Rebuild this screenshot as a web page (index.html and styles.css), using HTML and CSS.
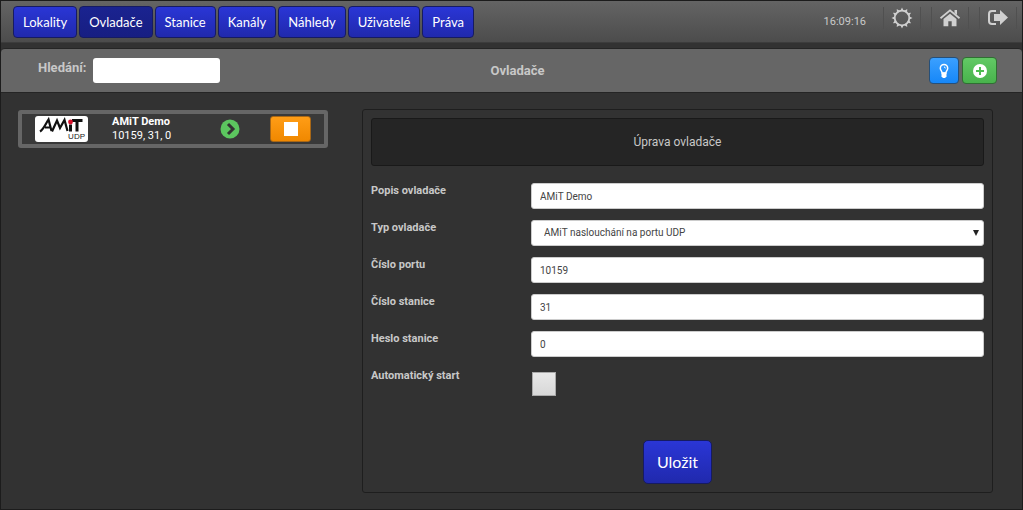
FILE: index.html
```html
<!DOCTYPE html>
<html lang="cs">
<head>
<meta charset="utf-8">
<title>Ovladače</title>
<link rel="stylesheet" href="styles.css">
</head>
<body>
<div class="app">
  <header class="topbar">
    <nav class="nav">
      <button class="nav-btn" type="button">Lokality</button>
      <button class="nav-btn active" type="button">Ovladače</button>
      <button class="nav-btn" type="button">Stanice</button>
      <button class="nav-btn" type="button">Kanály</button>
      <button class="nav-btn" type="button">Náhledy</button>
      <button class="nav-btn" type="button">Uživatelé</button>
      <button class="nav-btn" type="button">Práva</button>
    </nav>
    <time class="clock">16:09:16</time>
    <div class="tools">
      <a class="tool" href="#" aria-label="Nastavení"><svg width="22" height="22" viewBox="0 0 22 22"><circle cx="11" cy="11" r="7.3" fill="none" stroke="#d0d0d0" stroke-width="1.8"/><path d="M11 .5l1.500 3h-3zM11 21.500l1.500-3h-3zM.5 11l3 1.500v-3zM21.500 11l-3 1.500v-3z" fill="#d0d0d0"/><path d="M11 .5l1.500 3h-3zM11 21.500l1.500-3h-3zM.5 11l3 1.500v-3zM21.500 11l-3 1.500v-3z" fill="#d0d0d0" transform="rotate(30 11 11)"/><path d="M11 .5l1.500 3h-3zM11 21.500l1.500-3h-3zM.5 11l3 1.500v-3zM21.500 11l-3 1.500v-3z" fill="#d0d0d0" transform="rotate(60 11 11)"/></svg></a>
      <a class="tool" href="#" aria-label="Domů"><svg width="22" height="20" viewBox="0 0 22 20"><path d="M11 5.800 17.500 11v7.200h-4.800v-5H9.300v5H4.500V11z" fill="#d0d0d0"/><path d="M1.500 10.300 11 2.400l9.500 7.900" fill="none" stroke="#d0d0d0" stroke-width="1.800"/><path d="M15.500 2h2.500v5l-2.500-2z" fill="#d0d0d0"/></svg></a>
      <a class="tool" href="#" aria-label="Odhlásit"><svg width="22" height="20" viewBox="0 0 22 20"><path d="M9 3H5Q2 3 2 6v7q0 3 3 3h4" fill="none" stroke="#d0d0d0" stroke-width="2"/><path d="M7 6h6V2l8 7.500-8 7.500v-4H7z" fill="#d0d0d0"/></svg></a>
    </div>
  </header>
  <section class="subbar">
    <div class="search"><label for="q">Hledání:</label><input id="q" type="text"></div>
    <h1>Ovladače</h1>
    <div class="actions">
      <button class="act blue" type="button" aria-label="Nápověda"><svg width="12" height="16" viewBox="0 0 12 16"><path d="M6 1.500a3.700 3.700 0 0 1 3.700 3.700c0 2-1.700 2.700-1.800 4.800H4.100C4 7.900 2.300 7.200 2.300 5.200A3.700 3.700 0 0 1 6 1.500z" fill="none" stroke="#fff" stroke-width="1.500"/><path d="M6 4q1.300 0 1.400 1.400" fill="none" stroke="#fff"/><path d="M3.500 9.500h5v4L7 15H5l-1.500-1.500z" fill="#fff"/></svg></button>
      <button class="act green" type="button" aria-label="Přidat"><svg width="14" height="14" viewBox="0 0 14 14"><circle cx="7" cy="7" r="7" fill="#fff"/><path d="M7 3v8M3 7h8" stroke="#4fbd52" stroke-width="2"/></svg></button>
    </div>
  </section>
  <main class="content">
    <aside class="list">
      <div class="driver">
        <div class="logo"><svg width="52" height="26" viewBox="0 0 52 26"><path d="M5 15.500C9 13 10.500 8 13.500 3.500L16.500 15M10 11.500h5.500" fill="none" stroke="#111" stroke-width="2.200"/><path d="M17 15.500 22 4.500l3 7.500 4.500-8L32.500 15" fill="none" stroke="#111" stroke-width="2.200"/><path d="M35.500 8.500V15.500" stroke="#111" stroke-width="3"/><path d="M37 4.500h10.500M42 4v11.500" fill="none" stroke="#111" stroke-width="3"/><circle cx="35.500" cy="6" r="2.400" fill="#d8122c"/></svg><span>UDP</span></div>
        <div class="info"><strong>AMiT Demo</strong><span>10159, 31, 0</span></div>
        <svg class="go" width="20" height="20" viewBox="0 0 20 20"><circle cx="10" cy="10" r="9.500" fill="#5cc65f"/><path d="m8 5 5 5-5 5" fill="none" stroke="#333" stroke-width="3"/></svg>
        <button class="stop" type="button" aria-label="Zastavit"><svg width="14" height="14" viewBox="0 0 14 14"><path d="M0 0h14v14H0z" fill="#fff"/></svg></button>
      </div>
    </aside>
    <form class="panel">
      <h2>Úprava ovladače</h2>
      <div class="row"><label for="popis">Popis ovladače</label><input id="popis" type="text" value="AMiT Demo"></div>
      <div class="row"><label for="typ">Typ ovladače</label><div class="select"><select id="typ"><option>AMiT naslouchání na portu UDP</option></select><svg width="6" height="6" viewBox="0 0 6 6"><path d="M0 0h6L3 6z" fill="#222"/></svg></div></div>
      <div class="row"><label for="port">Číslo portu</label><input id="port" type="text" value="10159"></div>
      <div class="row"><label for="cislo">Číslo stanice</label><input id="cislo" type="text" value="31"></div>
      <div class="row"><label for="heslo">Heslo stanice</label><input id="heslo" type="text" value="0"></div>
      <div class="row"><label for="auto">Automatický start</label><input id="auto" type="checkbox"></div>
      <button class="save" type="button">Uložit</button>
    </form>
  </main>
</div>
</body>
</html>
```
FILE: styles.css
```css
* { box-sizing: border-box; }
body { margin: 0; background: #323232; color: #c8c8c8; font: 11px/14px Roboto, sans-serif; }
button, input, select { font: inherit; margin: 0; }
button { cursor: pointer; }
svg { display: block; }
.app { display: flex; flex-direction: column; min-height: 100vh; border: 1px solid #1c1c1c; }
.topbar { display: flex; align-items: center; height: 42px; padding: 0 5px 0 12px; background: linear-gradient(#646464, #4c4c4c); border-bottom: 1px solid #3c3c3c; }
.nav { display: flex; gap: 2px; flex: 1; }
.nav-btn { height: 32px; padding: 0 9px; color: #fff; font: 13px/20px Lato, sans-serif; background: linear-gradient(#2a36d6, #2029ad); border: 1px solid #161b62; border-radius: 4px; white-space: nowrap; }
.nav-btn.active { background: linear-gradient(#1a2390, #171e82); }
.clock { margin-right: 17px; }
.tools { display: flex; align-items: center; gap: 10px; margin-top: -8px; }
.tool { display: flex; align-items: center; justify-content: center; width: 38px; height: 22px; border: solid #505050; border-width: 0 1px; }
.subbar { display: grid; grid-template-columns: 1fr auto 1fr; align-items: center; height: 45px; margin-top: 5px; padding: 0 25px 0 37px; background: #666; border: solid #252525; border-width: 1px 0; border-radius: 4px 4px 0 0; }
.search { display: flex; gap: 7px; font-size: 13px; font-weight: 700; line-height: 20px; }
.search input { width: 127px; height: 25px; padding: 0 8px; border: 0; border-radius: 3px; background: #fff; }
.subbar h1 { margin: 0; font-size: 13px; line-height: 20px; }
.actions { display: flex; justify-content: flex-end; gap: 3px; }
.act { display: flex; align-items: center; justify-content: center; width: 30px; height: 27px; padding: 0; border: 1px solid #264f78; border-radius: 4px; }
.blue { background: linear-gradient(#3ba0ff, #1687f8); }
.green { width: 35px; background: linear-gradient(#62c965, #48b34c); border-color: #2f6f32; }
.content { flex: 1; display: grid; grid-template-columns: 310fr 631fr; gap: 34px; padding: 16px 29px 16px 17px; }
.list { padding-top: 1px; }
.driver { display: flex; align-items: center; height: 38px; padding: 0 13px; border: 4px solid #666; border-radius: 3px; background: #393939; color: #fff; }
.logo { position: relative; width: 53px; height: 26px; background: #fff; border-radius: 3px; }
.logo span { position: absolute; right: 3px; bottom: 1px; color: #222; font: 8px/8px "Liberation Sans", sans-serif; }
.info { display: flex; flex-direction: column; width: 77px; margin-left: 24px; white-space: nowrap; }
.go { margin: 0 auto; }
.stop { display: flex; align-items: center; justify-content: center; width: 41px; height: 26px; padding: 0; background: linear-gradient(#ff9d16, #f08800); border: 1px solid #a86716; border-radius: 3px; }
.panel { display: flex; flex-direction: column; padding: 8px; border: 1px solid #1e1e1e; border-radius: 3px; }
.panel h2 { margin: 0 0 17px; padding: 16px; text-align: center; font-size: 12px; line-height: 14px; font-weight: 400; background: #252525; border: 1px solid #191919; border-radius: 3px; }
.row { display: grid; grid-template-columns: 160px 1fr; align-items: start; min-height: 26px; margin-bottom: 11px; }
.row label { line-height: 16px; font-weight: 700; }
.row input[type="text"], .row select { width: 100%; height: 26px; padding: 0 8px; border: 1px solid #ccc; border-radius: 3px; background: #fff; color: #444; font-size: 10px; }
.select { position: relative; }
.row select { appearance: none; padding-left: 12px; }
.select svg { position: absolute; right: 5px; top: 10px; pointer-events: none; }
.row input[type="checkbox"] { appearance: none; width: 24px; height: 24px; margin: 4px 1px 0; background: linear-gradient(#e8e8e8, #d8d8d8); border: 1px solid #aaa; }
.save { align-self: center; height: 44px; margin: auto 0 0; padding: 0 13px; color: #fff; font: 16px/20px Lato, sans-serif; background: linear-gradient(#2a36d6, #2029ad); border: 1px solid #161b62; border-radius: 5px; }
```
